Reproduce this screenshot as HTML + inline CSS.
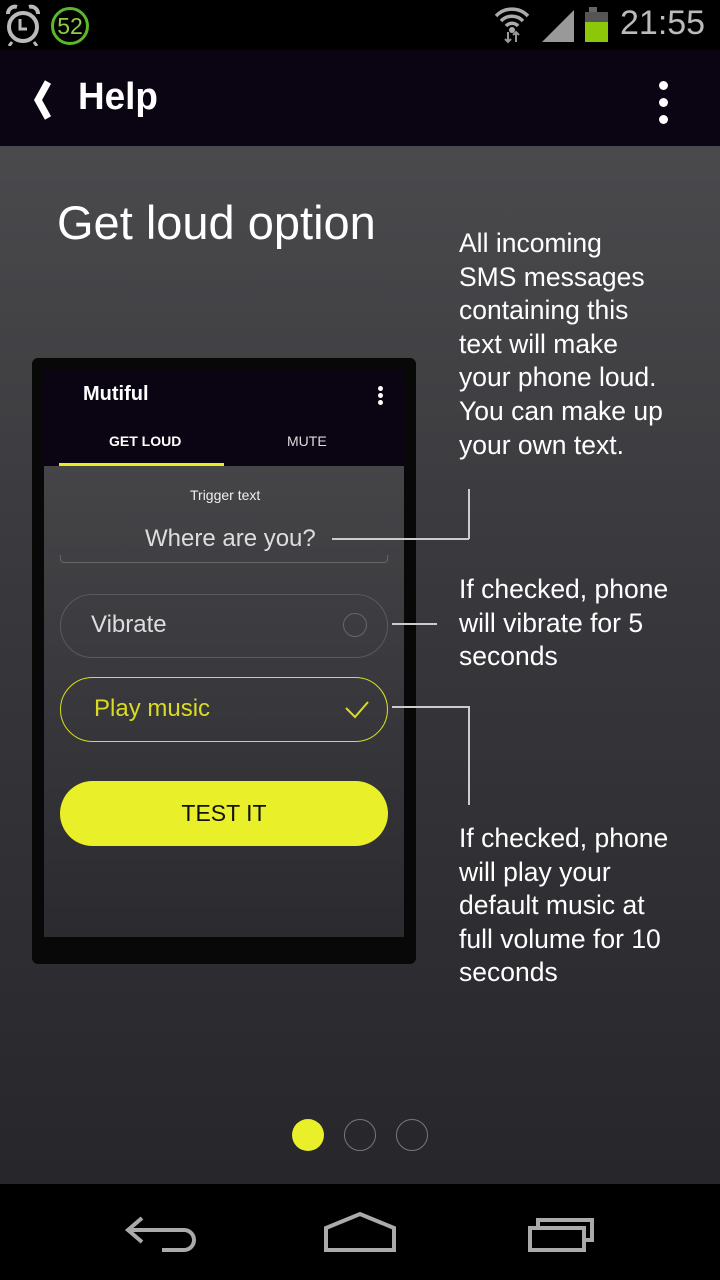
<!DOCTYPE html>
<html><head><meta charset="utf-8"><style>
*{margin:0;padding:0;box-sizing:border-box}
body{width:720px;height:1280px;overflow:hidden;position:relative;font-family:"Liberation Sans",sans-serif;background:linear-gradient(#4a4a4d 146px,#38383c 600px,#27262b 1184px)}
.abs{position:absolute}
.t{color:#fff;font-size:26.5px;line-height:33.6px;font-weight:300}
</style></head><body>
<div class="abs" style="left:0;top:0;width:720px;height:50px;background:#000"></div>
<svg class="abs" style="left:4px;top:4px" width="40" height="42" viewBox="0 0 40 42"><circle cx="19" cy="23" r="14" fill="none" stroke="#bbb" stroke-width="4"/><path d="M16 15v10h7" stroke="#bbb" stroke-width="3" fill="none"/><path d="M4 10a7 7 0 0 1 9-7M34 10a7 7 0 0 0-9-7" stroke="#bbb" stroke-width="4" fill="none"/><path d="M8 38l-3 4M30 38l3 4" stroke="#bbb" stroke-width="3"/></svg>
<div class="abs" style="left:51px;top:7px;width:38px;height:38px;border-radius:50%;border:3px solid #5cb82a;color:#8ad048;font-size:23px;text-align:center;line-height:32px">52</div>
<svg class="abs" style="left:494px;top:6px" width="36" height="38" viewBox="0 0 36 38"><path d="M2 10a22 22 0 0 1 32 0M7 15a15 15 0 0 1 22 0M12 20a8 8 0 0 1 12 0" stroke="#aaa" stroke-width="3.5" fill="none"/><circle cx="18" cy="24" r="3" fill="#aaa"/><path d="M14 26v10M11 33l3 3 3-3M22 36V26M19 29l3-3 3 3" stroke="#999" stroke-width="2" fill="none"/></svg>
<svg class="abs" style="left:542px;top:10px" width="34" height="32"><path d="M0 32L32 0V32Z" fill="#999"/></svg>
<div class="abs" style="left:589px;top:7px;width:8px;height:6px;background:#666"></div>
<div class="abs" style="left:585px;top:12px;width:23px;height:30px;background:#555"></div>
<div class="abs" style="left:585px;top:22px;width:23px;height:20px;background:#8cc70a"></div>
<div class="abs" style="left:620px;top:4px;color:#bbb;font-size:34px">21:55</div>
<div class="abs" style="left:0;top:50px;width:720px;height:96px;background:#0b0412"></div>
<svg class="abs" style="left:30px;top:80px" width="24" height="40"><path d="M18 2L8 20l10 18" stroke="#fff" stroke-width="7" fill="none"/></svg>
<div class="abs" style="left:78px;top:76px;color:#fff;font-size:38px;font-weight:bold;transform:scaleX(0.97);transform-origin:left">Help</div>
<div class="abs" style="left:659px;top:81px;width:9px;height:9px;border-radius:50%;background:#fff;box-shadow:0 17px #fff,0 34px #fff"></div>
<div class="abs" style="left:57px;top:195px;color:#fff;font-size:47px;font-weight:300">Get loud option</div>
<div class="abs t" style="left:459px;top:227px">All incoming<br>SMS messages<br>containing this<br>text will make<br>your phone loud.<br>You can make up<br>your own text.</div>
<div class="abs t" style="left:459px;top:573px">If checked, phone<br>will vibrate for 5<br>seconds</div>
<div class="abs t" style="left:459px;top:822px">If checked, phone<br>will play your<br>default music at<br>full volume for 10<br>seconds</div>
<div class="abs" style="left:32px;top:358px;width:384px;height:606px;background:#080808;border-radius:6px"></div>
<div class="abs" style="left:44px;top:370px;width:360px;height:567px;background:linear-gradient(#454548 96px,#3a3a3e 300px,#2b2b2f)"></div>
<div class="abs" style="left:44px;top:370px;width:360px;height:96px;background:#0b0412"></div>
<div class="abs" style="left:83px;top:383px;color:#fff;font-size:20px;font-weight:bold">Mutiful</div>
<div class="abs" style="left:378px;top:386px;width:5px;height:5px;border-radius:50%;background:#fff;box-shadow:0 7px #fff,0 14px #fff"></div>
<div class="abs" style="left:109px;top:433px;color:#fff;font-size:14px;font-weight:bold">GET LOUD</div>
<div class="abs" style="left:287px;top:433px;color:#ddd;font-size:14px">MUTE</div>
<div class="abs" style="left:59px;top:463px;width:165px;height:3px;background:#e9ec22"></div>
<div class="abs" style="left:190px;top:487px;color:#eee;font-size:14px">Trigger text</div>
<div class="abs" style="left:145px;top:525px;color:#ddd;font-size:24px;font-weight:300">Where are you?</div>
<div class="abs" style="left:60px;top:555px;width:328px;height:8px;border:1px solid #666;border-top:none;border-radius:0 0 4px 4px"></div>
<div class="abs" style="left:60px;top:594px;width:328px;height:64px;border:1.5px solid #5a5a5d;border-radius:32px"></div>
<div class="abs" style="left:91px;top:611px;color:#ddd;font-size:24px;font-weight:300">Vibrate</div>
<div class="abs" style="left:343px;top:613px;width:24px;height:24px;border:1.5px solid #666;border-radius:50%"></div>
<div class="abs" style="left:60px;top:677px;width:328px;height:65px;border:1.5px solid #d9dc20;border-radius:33px"></div>
<div class="abs" style="left:94px;top:695px;color:#d9dc20;font-size:24px;font-weight:300">Play music</div>
<svg class="abs" style="left:344px;top:699px" width="26" height="20"><path d="M2 9l9 9 13-15" stroke="#d9dc20" stroke-width="2" fill="none"/></svg>
<div class="abs" style="left:60px;top:781px;width:328px;height:65px;background:#e9ef28;border-radius:33px;text-align:center;line-height:65px;font-size:23px;color:#111">TEST IT</div>
<div class="abs" style="left:332px;top:538px;width:137px;height:1.5px;background:#ccc"></div>
<div class="abs" style="left:468px;top:489px;width:1.5px;height:50px;background:#ccc"></div>
<div class="abs" style="left:392px;top:623px;width:45px;height:1.5px;background:#ccc"></div>
<div class="abs" style="left:392px;top:706px;width:77px;height:1.5px;background:#ccc"></div>
<div class="abs" style="left:468px;top:706px;width:1.5px;height:99px;background:#ccc"></div>
<div class="abs" style="left:292px;top:1119px;width:32px;height:32px;border-radius:50%;background:#e9ef28"></div>
<div class="abs" style="left:344px;top:1119px;width:32px;height:32px;border-radius:50%;border:1.5px solid #777"></div>
<div class="abs" style="left:396px;top:1119px;width:32px;height:32px;border-radius:50%;border:1.5px solid #777"></div>
<div class="abs" style="left:0;top:1184px;width:720px;height:96px;background:#000"></div>
<svg class="abs" style="left:120px;top:1212px" width="80" height="44"><path d="M22 6L8 18l14 12M8 18h56a10 10 0 0 1 0 20H42" stroke="#aaa" stroke-width="4" fill="none"/></svg>
<svg class="abs" style="left:320px;top:1210px" width="80" height="44"><path d="M6 18L40 4l34 14v22H6Z" stroke="#aaa" stroke-width="4" fill="none"/></svg>
<svg class="abs" style="left:524px;top:1214px" width="76" height="40"><rect x="6" y="14" width="54" height="22" stroke="#aaa" stroke-width="4" fill="none"/><path d="M14 12V6h54v20h-6" stroke="#aaa" stroke-width="4" fill="none"/></svg>
</body></html>
